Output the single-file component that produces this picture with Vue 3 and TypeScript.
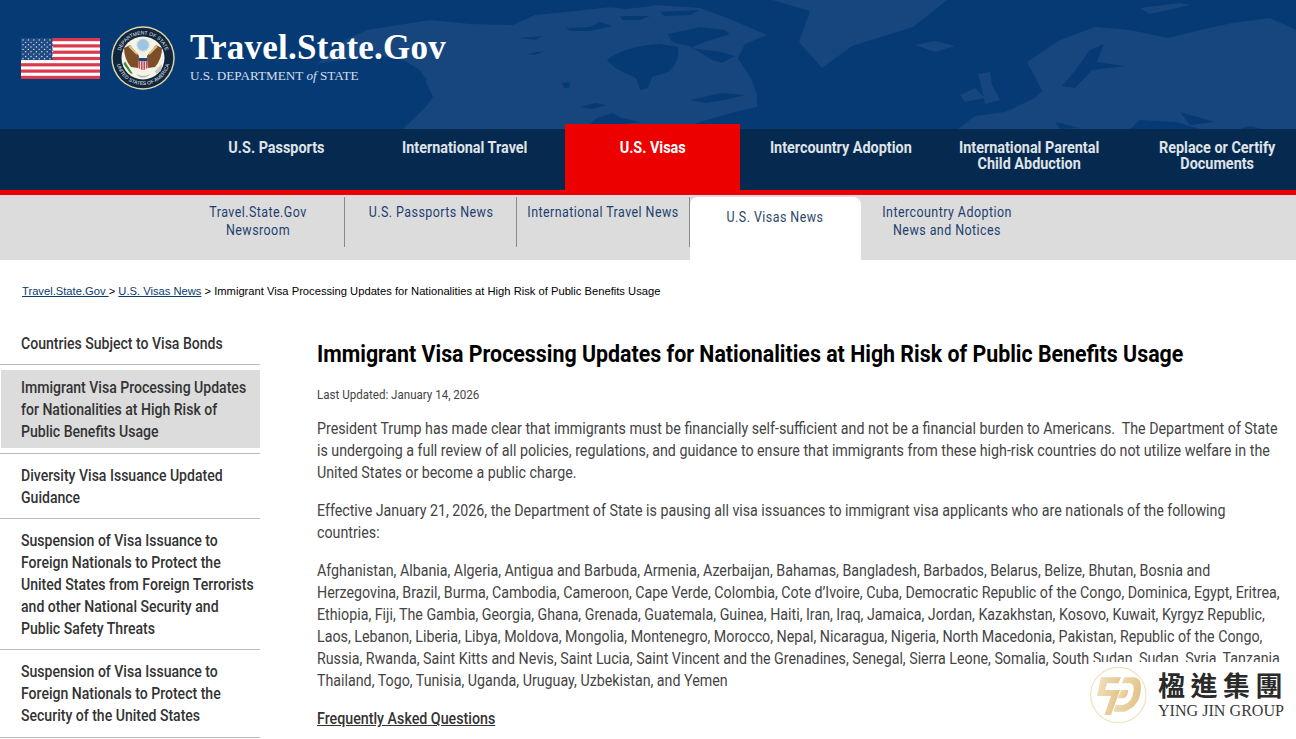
<script setup lang="ts">
const navItems = [
  { label: 'U.S. Passports' },
  { label: 'International Travel' },
  { label: 'U.S. Visas', active: true },
  { label: 'Intercountry Adoption' },
  { label: 'International Parental Child Abduction' },
  { label: 'Replace or Certify Documents' },
]

const subItems = [
  { label: 'Travel.State.Gov Newsroom' },
  { label: 'U.S. Passports News' },
  { label: 'International Travel News' },
  { label: 'U.S. Visas News', active: true },
  { label: 'Intercountry Adoption News and Notices' },
]

const sideItems = [
  { label: 'Countries Subject to Visa Bonds' },
  { label: 'Immigrant Visa Processing Updates for Nationalities at High Risk of Public Benefits Usage', active: true },
  { label: 'Diversity Visa Issuance Updated Guidance' },
  { label: 'Suspension of Visa Issuance to Foreign Nationals to Protect the United States from Foreign Terrorists and other National Security and Public Safety Threats' },
  { label: 'Suspension of Visa Issuance to Foreign Nationals to Protect the Security of the United States' },
]

const stripes = [0, 1, 2, 3, 4, 5, 6]
const starRows = [0, 1, 2, 3, 4, 5, 6, 7, 8]
</script>

<template>
  <div class="page">
    <header class="masthead">
      <svg class="map" viewBox="0 0 1296 129" aria-hidden="true">
        <path d="M317 64 L345 40 L367 30 L405 24 L430 20 L470 24 L513 25 L535 15 L557 13 L593 9 L640 4 L700 8 L730 19 L767 35 L745 44 L738 58 L752 80 L757 95 L757 107 L735 112 L700 122 L680 129 L403 129 L425 108 L433 97 L425 80 L420 70 L400 58 L370 55 Z" />
        <path class="sea" d="M607 60 Q625 46 660 44 L678 47 Q680 62 668 72 L652 77 L648 88 L640 90 L636 78 L615 68 Z" />
        <path class="sea" d="M566 28 L590 27 L600 22 L612 26 L590 31 L570 31 Z" />
        <path class="sea" d="M668 34 L700 27 L725 30 L730 34 L705 42 L690 48 L722 52 L735 56 L722 63 L712 60 L690 46 L672 42 Z" />
        <path class="sea" d="M520 13 L570 4 L640 0 L520 0 Z" />
        <path class="sea" d="M600 6 L640 3 L655 6 L625 9 Z M660 12 L700 10 L690 15 L665 16 Z M620 16 L650 16 L640 20 L622 20 Z" />
        <path class="sea" d="M690 100 L722 93 L745 95 L725 100 L705 103 Z" />
        <path class="sea" d="M580 107 L595 103 L607 105 L592 109 Z M585 129 L595 119 L612 113 L622 118 L640 122 L625 124 L612 129 Z" />
        <path class="sea" d="M562 83 L570 82 L569 88 L564 88 Z M520 38 L542 36 L536 40 Z M527 54 L544 51 L535 55 Z" />
        <path class="sea" d="M415 72 L427 78 L422 90 L416 84 Z" />
        <path d="M772 0 L947 0 L913 27 L852 46 L822 68 L799 42 L810 11 Z" />
        <path d="M915 45 L935 41 L955 46 L935 52 Z" />
        <path d="M960 95 L975 88 L985 98 L965 102 Z M978 74 L990 72 L992 85 L1000 100 L985 104 L982 90 Z" />
        <path d="M958 129 L975 116 L1005 112 L1035 98 L1042 91 L1027 62 L1060 40 L1095 27 L1130 30 L1168 38 L1200 30 L1232 23 L1270 18 L1296 30 L1296 129 Z" />
        <path class="sea" d="M1090 50 L1104 44 L1097 62 L1125 66 L1092 70 L1075 88 L1062 86 L1074 72 Z" />
        <path class="sea" d="M1060 129 L1055 122 L1080 128 Z M1130 129 L1140 120 L1175 122 L1200 129 Z M1180 112 L1215 122 L1190 125 Z M1240 129 L1250 126 L1262 129 Z" />
        <path d="M1140 8 L1180 3 L1190 5 L1150 14 Z" />
      </svg>
      <div class="brand">
        <svg class="flag" viewBox="0 0 79 41" aria-hidden="true">
          <rect width="79" height="41" fill="#fff" />
          <rect v-for="s in stripes" :key="s" x="0" :y="s * 6.3" width="79" height="3.2" fill="#d93a4e" />
          <rect width="31.5" height="22" fill="#1f4a82" />
          <g fill="#dfe6f0">
            <g v-for="r in starRows" :key="r">
              <circle v-for="c in 6" :key="c" :cx="(c - 1) * 5.4 + (r % 2 ? 4.6 : 2)" :cy="r * 2.35 + 2" r="0.7" />
            </g>
          </g>
        </svg>
        <svg class="seal" viewBox="0 0 64 64" aria-hidden="true">
          <defs>
            <path id="seal-top" d="M8.5 32 A23.5 23.5 0 0 1 55.5 32" />
            <path id="seal-bottom" d="M5 32 A27 27 0 0 0 59 32" />
          </defs>
          <circle cx="32" cy="32" r="31.7" fill="#e2d6a6" />
          <circle cx="32" cy="32" r="30.3" fill="#10263f" />
          <text class="seal-text"><textPath href="#seal-top" startOffset="50%" text-anchor="middle">DEPARTMENT OF STATE</textPath></text>
          <text class="seal-text"><textPath href="#seal-bottom" startOffset="50%" text-anchor="middle">UNITED STATES OF AMERICA</textPath></text>
          <circle cx="32" cy="32" r="21.5" fill="#f5f2e8" />
          <circle cx="32" cy="19" r="6" fill="#9cc5e4" stroke="#cfd6da" stroke-width="1.6" stroke-dasharray="1 0.8" />
          <path d="M13 22 L19 19 L28 30 L27 42 L20 41 Q13 33 13 22 Z" fill="#7c4f28" />
          <path d="M51 22 L45 19 L36 30 L37 42 L44 41 Q51 33 51 22 Z" fill="#7c4f28" />
          <path d="M18 20 L26 28 M46 20 L38 28" stroke="#dac784" stroke-width="1.8" />
          <circle cx="32" cy="29" r="2.5" fill="#f3efe2" />
          <rect x="27.5" y="32" width="9" height="3.4" fill="#24427a" />
          <path d="M27.5 35.4 H36.5 V42 Q32 46 27.5 42 Z" fill="#c9475a" />
          <path d="M29.5 35.4 V44 M32 35.4 V45 M34.5 35.4 V44" stroke="#f3efe2" stroke-width="0.9" />
          <path d="M12.5 38 L14 35.5 L20 45 L22 48 L19 47 Z" fill="#3f8a46" />
          <path d="M44 45 L51 38 L50 45 L45 48 Z" fill="#c9c6b8" />
          <path d="M25 48 Q32 52 39 48 L37 50 Q32 53 27 50 Z" fill="#bdb9a8" />
        </svg>
        <div class="brand-text">
          <strong>Travel.State.Gov</strong>
          <span>U.S. DEPARTMENT <em>of</em> STATE</span>
        </div>
      </div>
    </header>

    <nav class="main-nav">
      <a v-for="item in navItems" :key="item.label" class="nav-item" :class="{ active: item.active }">
        <span>{{ item.label }}</span>
      </a>
    </nav>

    <nav class="sub-nav">
      <a v-for="item in subItems" :key="item.label" class="sub-item" :class="{ active: item.active }">
        <span>{{ item.label }}</span>
      </a>
    </nav>

    <div class="crumbs">
      <a>Travel.State.Gov </a> &gt; <a>U.S. Visas News</a> &gt; Immigrant Visa Processing Updates for Nationalities at High Risk of Public Benefits Usage
    </div>

    <div class="layout">
      <aside class="side">
        <div v-for="item in sideItems" :key="item.label" class="side-item" :class="{ current: item.active }">
          <a><span>{{ item.label }}</span></a>
        </div>
      </aside>

      <main class="content">
        <h1>Immigrant Visa Processing Updates for Nationalities at High Risk of Public Benefits Usage</h1>
        <p class="updated">Last Updated: January 14, 2026</p>
        <p>President Trump has made clear that immigrants must be financially self-sufficient and not be a financial burden to Americans.&nbsp; The Department of State is undergoing a full review of all policies, regulations, and guidance to ensure that immigrants from these high-risk countries do not utilize welfare in the United States or become a public charge.</p>
        <p>Effective January 21, 2026, the Department of State is pausing all visa issuances to immigrant visa applicants who are nationals of the following countries:</p>
        <p>Afghanistan, Albania, Algeria, Antigua and Barbuda, Armenia, Azerbaijan, Bahamas, Bangladesh, Barbados, Belarus, Belize, Bhutan, Bosnia and Herzegovina, Brazil, Burma, Cambodia, Cameroon, Cape Verde, Colombia, Cote d’Ivoire, Cuba, Democratic Republic of the Congo, Dominica, Egypt, Eritrea, Ethiopia, Fiji, The Gambia, Georgia, Ghana, Grenada, Guatemala, Guinea, Haiti, Iran, Iraq, Jamaica, Jordan, Kazakhstan, Kosovo, Kuwait, Kyrgyz Republic, Laos, Lebanon, Liberia, Libya, Moldova, Mongolia, Montenegro, Morocco, Nepal, Nicaragua, Nigeria, North Macedonia, Pakistan, Republic of the Congo, Russia, Rwanda, Saint Kitts and Nevis, Saint Lucia, Saint Vincent and the Grenadines, Senegal, Sierra Leone, Somalia, South Sudan, Sudan, Syria, Tanzania, Thailand, Togo, Tunisia, Uganda, Uruguay, Uzbekistan, and Yemen</p>
        <p class="faq">Frequently Asked Questions</p>
      </main>
    </div>

    <div class="watermark">
      <svg class="wm-logo" viewBox="0 0 210 210" aria-hidden="true">
        <defs>
          <linearGradient id="wm-gold" x1="0" y1="0" x2="1" y2="0.3">
            <stop offset="0" stop-color="#f0e3bd" />
            <stop offset="1" stop-color="#e3c48a" />
          </linearGradient>
        </defs>
        <circle cx="100" cy="105" r="83" fill="none" stroke="#efe2c2" stroke-width="3.5" />
        <path d="M48 52 L108 52 L100 70 L66 70 L60 90 L105 90 L78 165 L58 165 L78 108 L36 108 Z" fill="url(#wm-gold)" />
        <path d="M118 52 H145 Q170 52 168 85 Q165 140 118 155 H86 L92 135 H115 Q142 128 146 90 Q148 72 135 70 H110 Z" fill="url(#wm-gold)" />
        <path d="M108 90 H130 Q128 112 115 115 H98 Z" fill="url(#wm-gold)" />
      </svg>
      <div class="wm-text">
        <strong>楹進集團</strong>
        <span>YING JIN GROUP</span>
      </div>
    </div>
  </div>
</template>

<style>
html, body {
  margin: 0;
  background: #fff;
  overflow: hidden;
}
</style>

<style scoped>
.page {
  position: relative;
  width: 1296px;
  height: 739px;
  overflow: hidden;
  font-family: Roboto, sans-serif;
  color: #444;
}

.masthead {
  position: relative;
  height: 129px;
  background: #053a74;
}

.map {
  position: absolute;
  inset: 0;
  width: 100%;
  height: 100%;
  fill: #17467f;
}

.map .sea {
  fill: #053a74;
}

.brand {
  position: relative;
  display: flex;
  align-items: flex-start;
  padding: 26px 0 0 21px;
}

.flag {
  width: 79px;
  height: 41px;
  margin: 12px 11px 0 0;
}

.seal {
  width: 64px;
  height: 64px;
  margin-right: 15px;
}

.seal-text {
  fill: #e8ebee;
  font-family: 'Liberation Sans', sans-serif;
  font-size: 5px;
}

.brand-text {
  display: flex;
  flex-direction: column;
  color: #fff;
  font-family: 'Liberation Serif', serif;
}

.brand-text strong {
  font-size: 35px;
  line-height: 42px;
  margin-top: 1px;
  letter-spacing: 0.25px;
}

.brand-text span {
  font-size: 13.2px;
  line-height: 16px;
  margin-top: -1px;
  color: #d5dfeb;
}

.brand-text em {
  font-style: italic;
}

.main-nav {
  display: flex;
  height: 61px;
  padding-left: 182px;
  background: #06294f;
  border-bottom: 5px solid #ec0000;
}

.nav-item {
  position: relative;
  flex: 0 0 188.3px;
  box-sizing: border-box;
  padding: 11px 14px 0;
  text-align: center;
  color: #dfe3e8;
  font-size: 16px;
  font-weight: 700;
  line-height: 16px;
}

/* the reference's Roboto is hinted narrower than ours, so text is squeezed */
.nav-item span {
  display: inline-block;
  transform: scaleX(0.9);
}

.nav-item.active {
  flex-basis: 175px;
  margin: -5px 6.5px 0;
  padding-top: 16px;
  background: #ec0000;
  color: #fff;
}

.sub-nav {
  display: flex;
  height: 65px;
  padding-left: 172.5px;
  background: #dcdcdc;
}

.sub-item {
  display: flex;
  justify-content: center;
  flex: 0 0 172.4px;
  min-width: 0;
  box-sizing: border-box;
  height: 50px;
  margin-top: 2px;
  padding-top: 6px;
  border-right: 1px solid #8a8a8a;
  text-align: center;
  color: #1c3f70;
  font-size: 14px;
  line-height: 18px;
  letter-spacing: 0.5px;
}

.sub-item span {
  flex: none;
  width: 176px;
  height: 36px;
  transform: scaleX(0.89);
}

.sub-item:last-child {
  border-right: 0;
}

.sub-item.active {
  flex-basis: 171px;
  height: 63px;
  padding-top: 11px;
  border-right: 0;
  border-radius: 8px 8px 0 0;
  background: #fff;
  color: #2b4766;
}

.crumbs {
  padding: 25px 0 0 22px;
  height: 20px;
  color: #000;
  font-family: 'Liberation Sans', sans-serif;
  font-size: 11.2px;
  line-height: 13px;
}

.crumbs a {
  color: #0a3a6e;
  text-decoration: underline;
}

.layout {
  display: flex;
  margin-top: 17px;
}

.side {
  flex: 0 0 260px;
  min-width: 0;
}

.side-item {
  padding: 11px 0 9px;
  border-bottom: 1px solid #bbb;
}

.side-item:last-child {
  padding-bottom: 10px;
}

.side-item a {
  display: block;
  padding-left: 20px;
  margin-left: 1px;
  color: #333;
  font-size: 16px;
  font-weight: 500;
  line-height: 22px;
}

.side-item a span {
  display: block;
  width: 269px;
  transform: scaleX(0.878);
  transform-origin: 0 0;
}

.side-item.current {
  padding: 5px 0;
}

.side-item.current a {
  padding-top: 7px;
  padding-bottom: 5px;
  background: #dcdcdc;
}

.content {
  flex: none;
  box-sizing: border-box;
  width: 1087px;
  padding: 17px 0 0 0;
  margin-left: 57px;
  transform: scaleX(0.89);
  transform-origin: 0 0;
}

.content h1 {
  margin: 0 0 15px;
  color: #000;
  font-size: 24px;
  font-weight: 700;
  line-height: 30px;
}

.content p {
  margin: 0 0 16px;
  font-size: 16px;
  line-height: 22px;
}

.content .updated {
  margin-bottom: 12px;
  font-size: 13px;
}

.content .faq {
  color: #333;
  font-weight: 500;
  text-decoration: underline;
}

.watermark {
  position: absolute;
  right: 0;
  bottom: 0;
  display: flex;
  gap: 3px;
  align-items: flex-start;
  width: 206px;
  height: 77px;
  background: #fff;
}

.wm-logo {
  flex: none;
  width: 70px;
  height: 70px;
  margin: -2px 0 0 -5px;
}

.wm-text {
  display: flex;
  flex-direction: column;
  padding-top: 6px;
  color: #2a2a2a;
}

.wm-text strong {
  font-family: 'Noto Sans CJK TC', serif;
  font-size: 27px;
  font-weight: 700;
  line-height: 34px;
  letter-spacing: 5.5px;
}

.wm-text span {
  font-family: 'Liberation Serif', serif;
  font-size: 16.1px;
  line-height: 18px;
  white-space: nowrap;
  color: #3a3a3a;
}
</style>
